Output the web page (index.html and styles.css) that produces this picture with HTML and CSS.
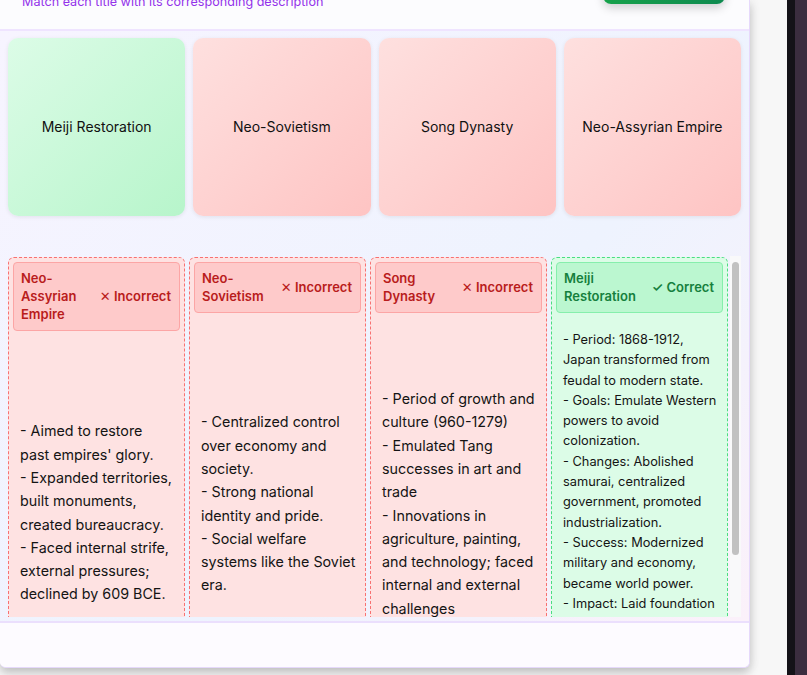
FILE: index.html
```html
<!DOCTYPE html>
<html lang="en">
<head>
<meta charset="utf-8">
<title>Historical Matching</title>
<link rel="stylesheet" href="styles.css">
</head>
<body>
<div class="screen">
  <div class="app">
    <header class="topbar">
      <div class="heading">
        <p class="subtitle">Match each title with its corresponding description</p>
      </div>
      <button class="check-btn" type="button">Check Answers</button>
    </header>

    <main class="board">
      <div class="titles">
        <div class="card ok">Meiji Restoration</div>
        <div class="card bad">Neo-Sovietism</div>
        <div class="card bad">Song Dynasty</div>
        <div class="card bad">Neo-Assyrian Empire</div>
      </div>

      <div class="desc-scroll">
        <div class="desc-grid">
          <div class="col bad">
            <div class="col-head">
              <span class="col-title">Neo-Assyrian Empire</span>
              <span class="status">✕ Incorrect</span>
            </div>
            <div class="col-body">
              <div>- Aimed to restore<br>past empires' glory.</div>
              <div>- Expanded territories,<br>built monuments,<br>created bureaucracy.</div>
              <div>- Faced internal strife,<br>external pressures;<br>declined by 609 BCE.</div>
            </div>
          </div>

          <div class="col bad">
            <div class="col-head">
              <span class="col-title">Neo-Sovietism</span>
              <span class="status">✕ Incorrect</span>
            </div>
            <div class="col-body">
              <div>- Centralized control<br>over economy and<br>society.</div>
              <div>- Strong national<br>identity and pride.</div>
              <div>- Social welfare<br>systems like the Soviet<br>era.</div>
            </div>
          </div>

          <div class="col bad">
            <div class="col-head">
              <span class="col-title">Song Dynasty</span>
              <span class="status">✕ Incorrect</span>
            </div>
            <div class="col-body">
              <div>- Period of growth and<br>culture (960-1279)</div>
              <div>- Emulated Tang<br>successes in art and<br>trade</div>
              <div>- Innovations in<br>agriculture, painting,<br>and technology; faced<br>internal and external<br>challenges</div>
            </div>
          </div>

          <div class="col ok">
            <div class="col-head">
              <span class="col-title">Meiji Restoration</span>
              <span class="status">✓ Correct</span>
            </div>
            <div class="col-body dense">
              <div>- Period: 1868-1912,<br>Japan transformed from<br>feudal to modern state.</div>
              <div>- Goals: Emulate Western<br>powers to avoid<br>colonization.</div>
              <div>- Changes: Abolished<br>samurai, centralized<br>government, promoted<br>industrialization.</div>
              <div>- Success: Modernized<br>military and economy,<br>became world power.</div>
              <div>- Impact: Laid foundation<br>for Japan's rise to<br>prominence in Asia and<br>the world.</div>
            </div>
          </div>
        </div>
        <div class="scrollbar"><div class="thumb"></div></div>
      </div>
    </main>

    <footer class="footer"></footer>
  </div>
  <div class="gutter"></div>
  <div class="desk"></div>
</div>
</body>
</html>
```

FILE: styles.css
```css
html, body {
  margin: 0;
  padding: 0;
  height: 100%;
}

body {
  font-family: Inter, "Noto Sans", "DejaVu Sans", sans-serif;
  background: #f7f7f7;
  overflow: hidden;
}

.screen {
  display: flex;
  height: 675px;
}

.app {
  box-sizing: border-box;
  width: 750px;
  height: 668px;
  flex-shrink: 0;
  display: flex;
  flex-direction: column;
  background: #fdfcff;
  border-right: 1px solid #e6d9fb;
  border-bottom: 1px solid #e6d9fb;
  border-radius: 0 0 6px 6px;
  box-shadow: 0 5px 10px rgba(0, 0, 0, 0.2), 0 0 14px rgba(0, 0, 0, 0.06);
  overflow: hidden;
}

.gutter {
  flex: 1;
}

.desk {
  width: 20px;
  background: linear-gradient(90deg, #141218 0, #141218 8px, #3b2d3f 8px, #3b2d3f 100%);
}

/* header */
.topbar {
  height: 29px;
  flex-shrink: 0;
  display: flex;
  justify-content: space-between;
  align-items: flex-start;
  padding: 0 24px 0 22px;
  background: #fcfcfe;
  border-bottom: 2px solid #efe4ff;
  overflow: hidden;
}

.subtitle {
  margin: -7px 0 0;
  font-size: 12.6px;
  line-height: 18px;
  color: #9333ea;
}

.check-btn {
  margin-top: -36px;
  width: 122px;
  height: 40px;
  border: 0;
  border-radius: 8px;
  background: linear-gradient(90deg, #17a24b, #0e8a50);
  color: #fff;
  font-family: inherit;
  font-weight: 600;
  box-shadow: 0 4px 10px rgba(0, 0, 0, 0.18);
}

/* board */
.board {
  flex: 1;
  display: flex;
  flex-direction: column;
  padding: 7px 8px 0;
  background: linear-gradient(135deg, #f7f4ff 0%, #eef3fe 60%, #fbf1fa 100%);
  overflow: hidden;
}

.titles {
  display: grid;
  grid-template-columns: repeat(4, 1fr);
  gap: 8px;
}

.card {
  height: 178px;
  border-radius: 10px;
  display: flex;
  align-items: center;
  justify-content: center;
  padding-bottom: 1px;
  box-sizing: border-box;
  font-size: 14px;
  color: #111;
  box-shadow: 0 1px 4px rgba(0, 0, 0, 0.08);
}

.card.ok {
  background: linear-gradient(135deg, #dcfce7, #b7f5cb);
}

.card.bad {
  background: linear-gradient(135deg, #fee0df, #fec4c3);
}

/* descriptions */
.desc-scroll {
  margin-top: 40px;
  height: 361px;
  flex-shrink: 0;
  display: flex;
  overflow: hidden;
}

.desc-grid {
  display: grid;
  grid-template-columns: repeat(4, 177px);
  gap: 4px;
  padding: 1px 0 5px;
  align-self: flex-start;
}

.scrollbar {
  width: 11px;
  margin-left: 2px;
  background: #f9f9fa;
  padding-top: 6px;
  box-sizing: border-box;
}

.thumb {
  width: 7px;
  height: 293px;
  margin: 0 auto;
  border-radius: 4px;
  background: #c1c1c1;
}

.col {
  box-sizing: border-box;
  height: 438px;
  display: flex;
  flex-direction: column;
  padding: 4px;
  border: 1px dashed;
  border-radius: 6px;
}

.col.bad {
  background: #fee2e2;
  border-color: #f87171;
}

.col.ok {
  background: #dcfce7;
  border-color: #4ade80;
}

.col-head {
  display: flex;
  justify-content: space-between;
  align-items: center;
  gap: 6px;
  padding: 6px 8px 7px 7px;
  border: 1px solid;
  border-radius: 4px;
  font-size: 13px;
  line-height: 18px;
  font-weight: 600;
}

.bad .col-head {
  background: #fecaca;
  border-color: #fca5a5;
  color: #b91c1c;
}

.ok .col-head {
  background: #bbf7d0;
  border-color: #86efac;
  color: #15803d;
}

.status {
  white-space: nowrap;
  flex-shrink: 0;
}

.col-body {
  flex: 1;
  display: flex;
  flex-direction: column;
  justify-content: center;
  padding: 4px 7px 0;
  font-size: 14.3px;
  line-height: 23.3px;
  color: #141414;
  white-space: nowrap;
}

.col-body.dense {
  padding-top: 2px;
  font-size: 12.8px;
  line-height: 20.3px;
}

/* footer */
.footer {
  height: 44px;
  flex-shrink: 0;
  background: #fdfbff;
  border-top: 2px solid #ebdffd;
}
```
